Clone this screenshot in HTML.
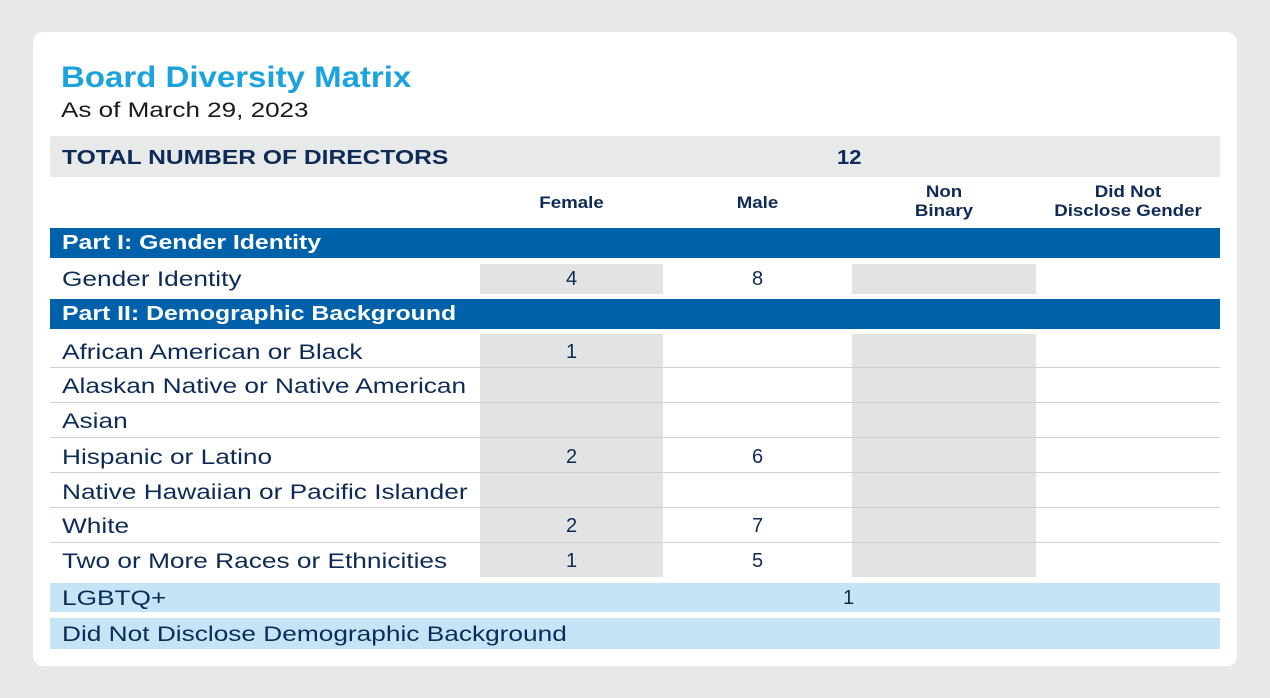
<!DOCTYPE html>
<html><head><style>
*{margin:0;padding:0;box-sizing:border-box}
body{width:1270px;height:698px;background:#e8e8e8;font-family:"Liberation Sans",sans-serif;color:#0d2b56;position:relative;overflow:hidden}
.card{position:absolute;left:33px;top:32px;width:1204px;height:634px;background:#fff;border-radius:10px}
.a{position:absolute}
.t{font-size:21px;line-height:20px;white-space:nowrap;transform:translateY(1px) scaleX(1.25);transform-origin:0 0}
.c{text-align:center;transform:none;font-size:20px}
.g{background:#e2e3e3}
.line{position:absolute;left:50px;width:1170px;height:1px;background:#cfd0d0}
.blue{background:#0061ab;color:#fff;font-weight:bold;font-size:20px;padding-left:12px;white-space:nowrap}
.blue span{display:inline-block;transform:scaleX(1.24);transform-origin:0 0}
.h{font-weight:bold;font-size:17px;line-height:19px;text-align:center;transform:scaleX(1.1)}
</style></head><body>
<div class="card"></div>
<div class="a" style="left:61px;top:61px;font-size:30px;font-weight:bold;color:#1aa3dc;white-space:nowrap;transform:scaleX(1.1);transform-origin:0 0">Board Diversity Matrix</div>
<div class="a t" style="left:61px;top:101px;color:#1a1a1a;transform:scaleX(1.24)">As of March 29, 2023</div>
<div class="a" style="left:50px;top:136px;width:1170px;height:41px;background:#e8e9e9"></div>
<div class="a t" style="left:62px;top:148px;font-weight:bold;font-size:20px;transform:scaleX(1.23)">TOTAL NUMBER OF DIRECTORS</div>
<div class="a t" style="left:837px;top:148px;font-weight:bold;font-size:20px;transform:scaleX(1.1)">12</div>
<div class="a h" style="left:480px;width:183px;top:193px">Female</div>
<div class="a h" style="left:663px;width:189px;top:193px">Male</div>
<div class="a h" style="left:852px;width:184px;top:182px">Non<br>Binary</div>
<div class="a h" style="left:1036px;width:184px;top:182px">Did Not<br>Disclose Gender</div>
<div class="a blue" style="left:50px;top:228px;width:1170px;height:30px;line-height:31px"><span>Part I: Gender Identity</span></div>
<div class="a g" style="left:480px;top:264px;width:183px;height:30px"></div>
<div class="a g" style="left:852px;top:264px;width:184px;height:30px"></div>
<div class="a t" style="left:62px;top:269px">Gender Identity</div>
<div class="a t c" style="left:480px;width:183px;top:269px">4</div>
<div class="a t c" style="left:663px;width:189px;top:269px">8</div>
<div class="a blue" style="left:50px;top:299px;width:1170px;height:30px;line-height:31px"><span>Part II: Demographic Background</span></div>
<div class="a g" style="left:480px;top:334px;width:183px;height:243px"></div>
<div class="a g" style="left:852px;top:334px;width:184px;height:243px"></div>
<div class="line" style="top:367px"></div><div class="line" style="top:402px"></div><div class="line" style="top:437px"></div><div class="line" style="top:472px"></div><div class="line" style="top:507px"></div><div class="line" style="top:542px"></div>
<div class="a t" style="left:62px;top:342px">African American or Black</div>
<div class="a t" style="left:62px;top:376px">Alaskan Native or Native American</div>
<div class="a t" style="left:62px;top:411px">Asian</div>
<div class="a t" style="left:62px;top:447px">Hispanic or Latino</div>
<div class="a t" style="left:62px;top:482px">Native Hawaiian or Pacific Islander</div>
<div class="a t" style="left:62px;top:516px">White</div>
<div class="a t" style="left:62px;top:551px">Two or More Races or Ethnicities</div>
<div class="a t c" style="left:480px;width:183px;top:342px">1</div>
<div class="a t c" style="left:480px;width:183px;top:447px">2</div>
<div class="a t c" style="left:663px;width:189px;top:447px">6</div>
<div class="a t c" style="left:480px;width:183px;top:516px">2</div>
<div class="a t c" style="left:663px;width:189px;top:516px">7</div>
<div class="a t c" style="left:480px;width:183px;top:551px">1</div>
<div class="a t c" style="left:663px;width:189px;top:551px">5</div>
<div class="a" style="left:50px;top:583px;width:1170px;height:29px;background:#c5e5f7"></div>
<div class="a t" style="left:62px;top:588px">LGBTQ+</div>
<div class="a t c" style="left:843px;top:588px">1</div>
<div class="a" style="left:50px;top:618px;width:1170px;height:31px;background:#c5e5f7"></div>
<div class="a t" style="left:62px;top:624px">Did Not Disclose Demographic Background</div>
</body></html>
